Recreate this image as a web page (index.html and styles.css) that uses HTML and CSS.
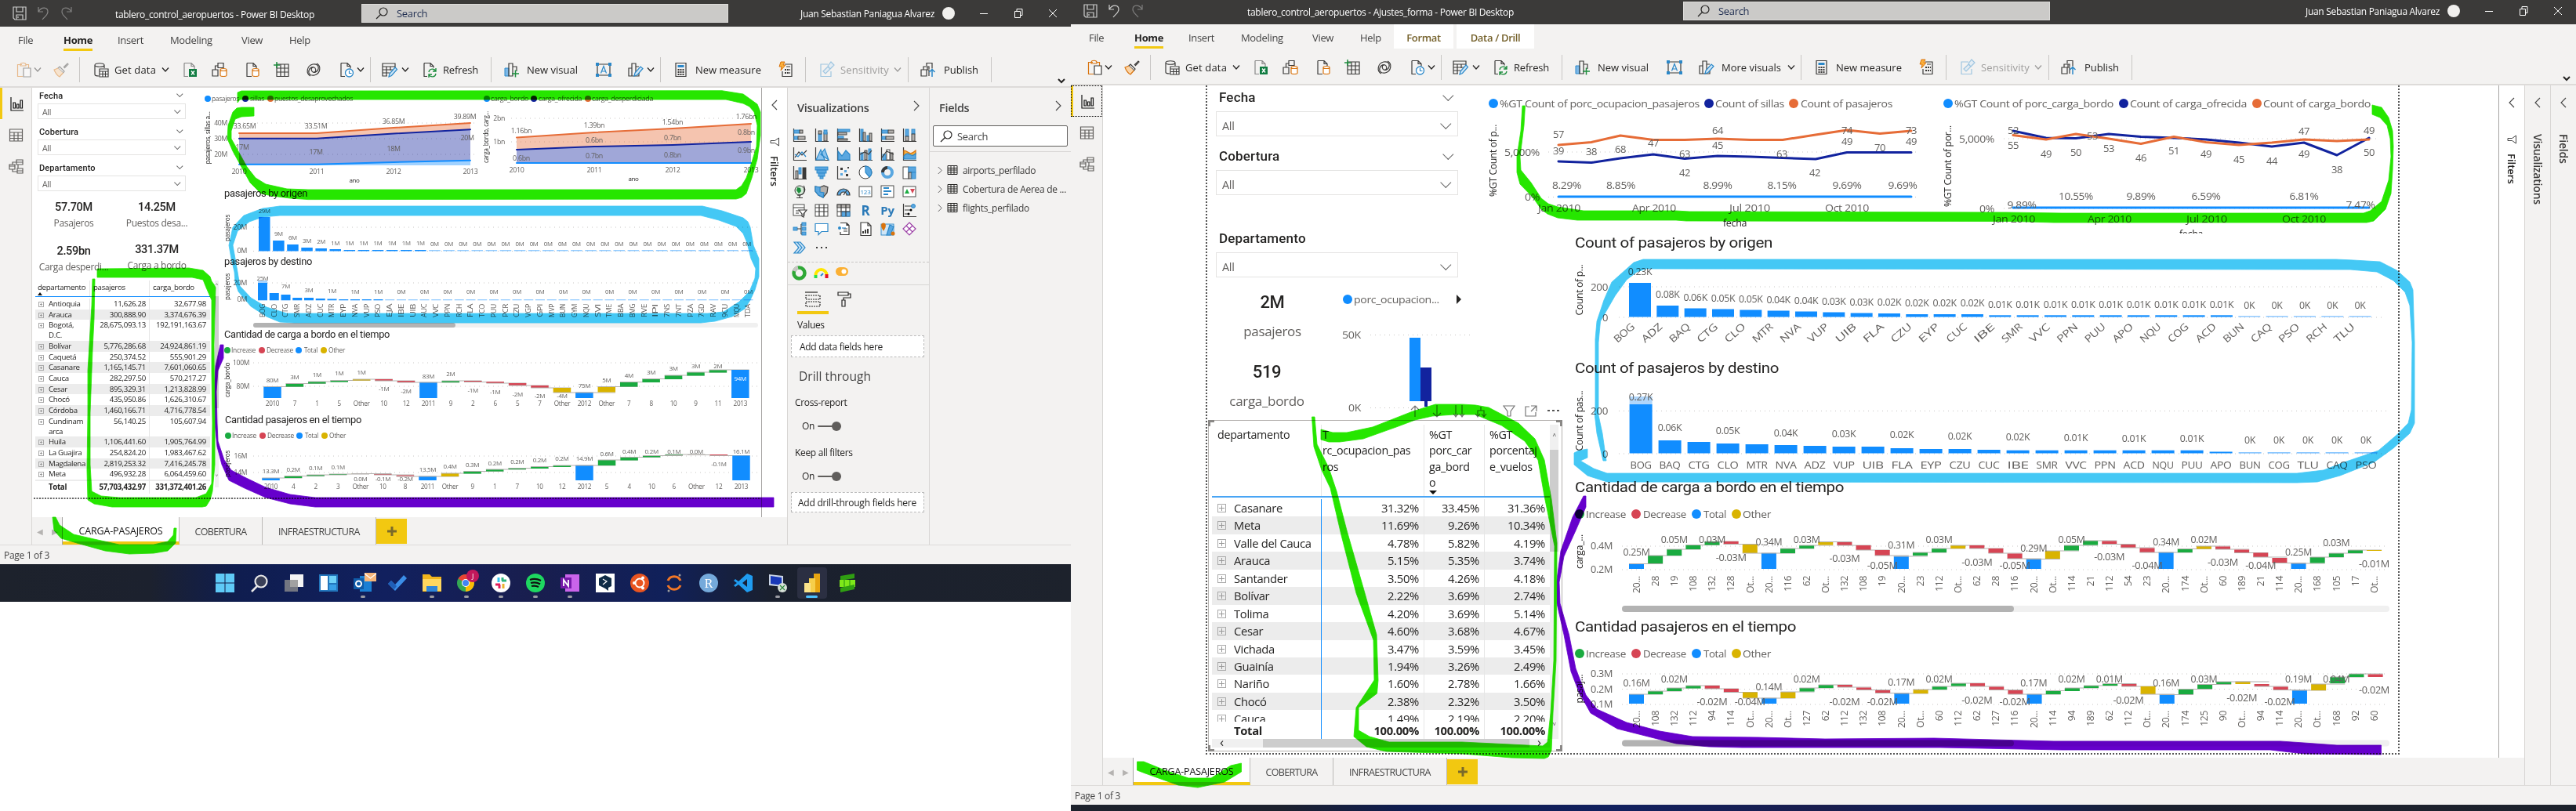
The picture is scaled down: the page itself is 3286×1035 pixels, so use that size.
FILE: index.html
```html
<!DOCTYPE html>
<html lang="en">
<head>
<meta charset="utf-8">
<title>tablero_control_aeropuertos</title>
<link rel="stylesheet" href="styles.css">
</head>
<body>
<main class="desk">
  <section class="win win-a">
    <header class="titlebar" data-title="tablero_control_aeropuertos - Power BI Desktop" data-w="254"></header>
    <nav class="menu"></nav>
    <div class="ribbon"></div>
    <div class="body">
      <aside class="rail"></aside>
      <div class="center">
        <div class="stage">
          <div class="report">
            <div class="col-a">
              <div class="slicers">
                <div class="slicer"><div class="slicer-h">Fecha<i class="cv"></i></div><div class="drop">All<i class="cv"></i></div></div>
                <div class="slicer"><div class="slicer-h">Cobertura<i class="cv"></i></div><div class="drop">All<i class="cv"></i></div></div>
                <div class="slicer"><div class="slicer-h">Departamento<i class="cv"></i></div><div class="drop">All<i class="cv"></i></div></div>
              </div>
              <div class="cards">
                <div class="card"><b>57.70M</b><span>Pasajeros</span></div>
                <div class="card"><b>14.25M</b><span>Puestos desa...</span></div>
                <div class="card low"><b>2.59bn</b><span>Carga desperdi...</span></div>
                <div class="card"><b>331.37M</b><span>Carga a bordo</span></div>
              </div>
              <div class="matrix-wrap">
                <div class="matrix" id="matrixA"></div>
                <div class="vscroll"><em>˄</em><i></i><em>˅</em></div>
              </div>
            </div>
            <div class="col-b">
              <div class="pair"><svg id="a1"></svg><svg id="a2"></svg></div>
              <svg id="a3"></svg><svg id="a4"></svg><svg id="a5"></svg><svg id="a6"></svg>
            </div>
          </div>
          <aside class="filters"></aside>
        </div>
        <footer class="tabs"></footer>
      </div>
      <aside class="viz">
        <h2>Visualizations<svg class="arr" viewBox="0 0 8 14"><path d="M1 1l6 6-6 6"/></svg></h2>
        <div class="viz-grid" id="vizGrid"></div>
        <div class="custom" id="custom"></div>
        <div class="fmt" id="fmt"></div>
        <p class="lbl">Values</p>
        <div class="well"><span data-fit="106">Add data fields here</span></div>
        <h3><span data-fit="92">Drill through</span></h3>
        <p class="sub">Cross-report</p>
        <div class="toggle">On<i></i></div>
        <p class="sub">Keep all filters</p>
        <div class="toggle">On<i></i></div>
        <div class="well w2"><span data-fit="151">Add drill-through fields here</span></div>
      </aside>
      <aside class="fields">
        <h2>Fields<svg class="arr" viewBox="0 0 8 14"><path d="M1 1l6 6-6 6"/></svg></h2>
        <div class="fsearch"><svg class="mag" viewBox="0 0 16 16"><circle cx="10" cy="6" r="5"/><path d="M6.5 9.5L1 15"/></svg>Search</div>
        <ul id="fieldList"></ul>
      </aside>
    </div>
    <div class="status">Page 1 of 3</div>
    <div class="taskbar" id="taskbar"></div>
  </section>

  <section class="win win-b">
    <header class="titlebar" data-title="tablero_control_aeropuertos - Ajustes_forma - Power BI Desktop" data-w="340"></header>
    <nav class="menu"></nav>
    <div class="ribbon"></div>
    <div class="body">
      <aside class="rail"></aside>
      <div class="center">
        <div class="stage">
          <div class="report">
            <div class="col-a">
              <div class="slicers">
                <div class="slicer"><div class="slicer-h">Fecha<i class="cv"></i></div><div class="drop">All<i class="cv"></i></div></div>
                <div class="slicer"><div class="slicer-h">Cobertura<i class="cv"></i></div><div class="drop">All<i class="cv"></i></div></div>
                <div class="slicer far"><div class="slicer-h">Departamento</div><div class="drop">All<i class="cv"></i></div></div>
              </div>
              <div class="mid">
                <div class="cards">
                  <div class="card"><b>2M</b><span>pasajeros</span></div>
                  <div class="card low"><b>519</b><span>carga_bordo</span></div>
                </div>
                <svg id="b0"></svg>
              </div>
              <div class="matrix-frame">
                <div class="matrix" id="matrixB"></div>
                <div class="vscroll"><em>˄</em><i></i><em>˅</em></div>
                <div class="hscroll"><em>‹</em><i></i><em>›</em></div>
                <s class="h tl"></s><s class="h tr"></s><s class="h bl"></s><s class="h br"></s>
              </div>
            </div>
            <div class="col-b">
              <div class="pair"><svg id="b1"></svg><svg id="b2"></svg></div>
              <svg id="b3"></svg><svg id="b4"></svg><svg id="b5"></svg><svg id="b6"></svg>
            </div>
          </div>
          <aside class="filters"></aside>
        </div>
        <footer class="tabs"></footer>
      </div>
      <aside class="slim"><svg class="arr" viewBox="0 0 8 14"><path d="M7 1L1 7l6 6"/></svg><span>Visualizations</span></aside>
      <aside class="slim"><svg class="arr" viewBox="0 0 8 14"><path d="M7 1L1 7l6 6"/></svg><span>Fields</span></aside>
    </div>
    <div class="status">Page 1 of 3</div>
    <div class="taskbar"></div>
  </section>
  <svg class="ink" id="ink" viewBox="0 0 3286 1035"></svg>
</main>
<script src="app.js"></script>
</body>
</html>
```
FILE: styles.css
```css
*{box-sizing:border-box}
body{margin:0;background:#fff;font-family:"Open Sans","Noto Sans",sans-serif;color:#252423;letter-spacing:-.02em}
h2,h3,p,ul{margin:0;padding:0;font-weight:400}
svg{display:block;overflow:visible}
.desk{position:relative;display:flex;align-items:flex-start;width:3286px;height:1035px;overflow:hidden}
.ink{position:absolute;left:0;top:0;width:3286px;height:1035px;mix-blend-mode:multiply;pointer-events:none}
.win{display:flex;flex-direction:column;background:#f3f2f1}
.win-a{width:1366px;height:768px}
.win-b{width:1920px;height:1038px;margin-top:-3px}

.titlebar{display:flex;align-items:center;height:34px;flex:none;background:#3b3a39;color:#fff;font-size:12px}
.titlebar .quick{display:flex;gap:10px;width:147px;padding-left:15px}
.titlebar .quick svg{width:20px;height:20px}
.titlebar .ttl{width:314px;white-space:nowrap;padding-top:3px}
.win-b .titlebar .quick{width:225px}
.win-b .titlebar .ttl{width:556px}
.titlebar .find{display:flex;align-items:center;gap:11px;width:468px;height:24px;padding-left:17px;background:#cbcac8;border:1px solid #dcdbd9;color:#1f2d50;font-size:13px}
.mag{width:16px;height:16px;fill:none;stroke:#252423;stroke-width:1.2}
.titlebar .who{margin-left:auto;display:flex;align-items:center;width:345px;white-space:nowrap}
.titlebar .who .nm{width:181px}
.titlebar .ava{width:16px;height:16px;border-radius:50%;background:#f1f0ee}
.titlebar .ctl{display:flex;gap:32px;margin-left:31px}
.titlebar .ctl svg{width:12px;height:12px;fill:none;stroke:#fff}

.menu{display:flex;height:31px;flex:none;font-size:13px;color:#444;padding-left:23px}
.menu span{height:31px;line-height:34px;white-space:nowrap}
.menu span b{color:#252423;font-weight:700;display:inline-block;height:31px;border-bottom:3px solid #f2c811}
.menu .ctx{background:#fff;color:#74602a;font-weight:600;margin-right:4px;text-align:center}
.ribbon{display:flex;align-items:center;height:47px;flex:none;padding:2px 0 0 21px;border-bottom:2px solid #dddbd9;font-size:13px;position:relative}
.ribbon>*{flex:none;white-space:nowrap}
.ribbon svg.ic{height:20px}
.ribbon .sep{height:32px;border-left:1px solid #c8c6c4}
.ribbon .dim{opacity:.42}
.ribbon .more{position:absolute;right:7px;bottom:3px;width:10px;height:7px;fill:none;stroke:#252423;stroke-width:2}
.lite{opacity:.45}
.win-b .ribbon .lite{opacity:1}

.body{display:flex;flex:1;min-height:0;border-bottom:1px solid #dddbd9}
.rail{width:41px;flex:none;border-right:1px solid #d8d6d4}
.rail div{height:40px;display:flex;align-items:center;justify-content:center}
.rail div:first-child{border-left:3px solid #f2c811}
.win-b .rail div:first-child{outline:1px dotted #000;outline-offset:-1px}
.rail svg{width:19px;height:19px;fill:none;stroke:#605e5c;stroke-width:1.2}
.center{flex:1;min-width:0;display:flex;flex-direction:column}
.stage{flex:1;min-height:0;display:flex;background:#fff}
.report{flex:1;display:flex;min-width:0}
.filters{width:33px;flex:none;border-left:1px solid #a6a4a2;display:flex;flex-direction:column;align-items:center;padding-top:15px}
.arr{width:8px;height:14px;fill:none;stroke:#444;stroke-width:1.1}
.filters .fun{width:12px;height:12px;margin:34px 0 12px;fill:none;stroke:#444}
.filters span{writing-mode:vertical-rl;font-weight:600;font-size:13px;letter-spacing:0}
.slim{width:33px;flex:none;border-left:1px solid #d8d6d4;display:flex;flex-direction:column;align-items:center;padding-top:15px;gap:33px}
.slim span{writing-mode:vertical-rl;font-size:14px;font-weight:600;color:#3b3a39;letter-spacing:-.2px}

.tabs{display:flex;height:35px;flex:none;font-size:12.5px;color:#444;background:#f3f2f1}
.tabs .nav{width:39px;display:flex;align-items:center;justify-content:space-around;font-size:10px;color:#b5b3b1;border-right:1px solid #a6a4a2}
.tabs .tab{display:flex;align-items:center;justify-content:center;border-right:1px solid #bbb9b7;padding-top:1px}
.tabs .on{width:149px;background:#fff;color:#111;border-bottom:4px solid #f2c811;padding-top:4px}
.tabs .t2{width:106px}.tabs .t3{width:145px}
.tabs .plus{width:39px;height:32px;margin-top:2px;background:#f2c811;display:flex;align-items:center;justify-content:center}
.tabs .plus svg{width:12px;height:12px;stroke:#7a6a2a;stroke-width:3}
.status{height:24px;flex:none;font-size:12px;line-height:26px;padding-left:5px;color:#444}
.taskbar{height:48px;flex:none;background:linear-gradient(90deg,#1d222c 0,#1c212e 14%,#0f1d4f 22%,#11205e 36%,#191e4e 50%,#10205a 62%,#1a202e 72%,#1d222c 100%);display:flex;padding-left:265px}
.taskbar div{width:44.05px;flex:none;display:flex;flex-direction:column;align-items:center;padding-top:12px;gap:4px}
.taskbar svg{width:24px;height:24px}
.taskbar u{display:block;width:6px;height:3px;border-radius:2px;background:#9b9ca3}
.taskbar .act{background:#2b2f42;border-radius:4px;height:40px;margin:4px 3px 0;width:38px;padding-top:8px}
.taskbar .act u{width:15px;background:#4cc2ff}
.win-b .taskbar{height:8px}

.cv{display:inline-block;width:6px;height:6px;border:solid #666;border-width:0 1px 1px 0;transform:rotate(45deg) translate(-2px,-1px)}
.slicer-h{display:flex;justify-content:space-between;align-items:center;font-family:Roboto,sans-serif;font-weight:500;letter-spacing:.01em}
.drop{display:flex;justify-content:space-between;align-items:center;border:1px solid #e4e3e2;color:#605e5c}

/* first report */
.win-a .col-a{width:238px;flex:none;display:flex;flex-direction:column}
.win-a .slicers{height:135px;padding-left:7px;width:196px}
.win-a .slicer{height:46px;font-size:10.5px}
.win-a .slicer-h{height:20px;padding:0 4px 0 2px;font-size:11px}
.win-a .drop{height:20px;padding:2px 6px 0 5px}
.win-a .cards{display:grid;grid-template-columns:106px 106px;grid-template-rows:54px 54px;height:111px;font-size:12px;color:#605e5c}
.card{display:flex;flex-direction:column;align-items:center;white-space:nowrap}
.card b{font-family:Roboto,sans-serif;font-weight:500;color:#252423}
.win-a .card b{font-size:14.5px;line-height:20px;margin-top:8px}
.win-a .card span{line-height:20px}
.win-a .card.low b{margin-top:10px}
.matrix-wrap{display:flex;padding-left:4px;height:280px}
.tri{display:block;width:0;height:0;border:solid transparent;border-width:0 3px 4px;border-bottom-color:#111}
.tri.dn{border-width:5px 5px 0;border-top-color:#111}
#matrixA{width:223px;height:272px;display:flex;flex-direction:column;font-size:9.7px}
#matrixA .r{display:grid;grid-template-columns:69px 76px 77px;line-height:13px;flex:none;height:13.7px}
#matrixA .r.two{height:26.6px}
#matrixA .r>*{padding-right:4px;text-align:right;border-left:1px solid #e6e6e6}
#matrixA .r>:first-child{text-align:left;display:flex;gap:6px;padding-left:4px;border-left:0;padding-right:0}
#matrixA .hd{height:21px;border-bottom:1px solid #118dff;line-height:17px}
#matrixA .hd>*{text-align:left;padding-left:4px}
#matrixA .hd>:first-child{display:block;padding-left:3px}
#matrixA .hd .tri{margin-top:-2px}
#matrixA .rows{flex:1;overflow:hidden;padding-top:2px}
#matrixA .alt{background:#ececec}
#matrixA .tot{font-weight:700;height:16px;line-height:16px}
#matrixA .tot>:first-child{padding-left:17px}
.ex{width:7px;height:7px;flex:none;margin-top:4px;border:1px solid #aaa;background:linear-gradient(#999,#999) center/3px 1px no-repeat,linear-gradient(#999,#999) center/1px 3px no-repeat}
.vscroll{display:flex;flex-direction:column;width:11px;background:#f0f0f0;font-size:11px;color:#444}
.vscroll em{font-style:normal;height:20px;text-align:center}
.vscroll i{background:#cdcdcd}
.matrix-wrap .vscroll{width:5px;margin-left:6px;height:264px}
.matrix-wrap .vscroll i{height:143px}
.matrix-wrap .vscroll em:last-child{margin-top:auto}
.win-a .col-b{flex:1}
.pair{display:flex}

/* second report */
.win-b .report{position:relative;padding-left:131px}
.win-b .report::after{content:"";position:absolute;left:131px;top:0;width:1519px;height:852px;border:solid #555;border-width:0 2px 2px;border-style:dotted;pointer-events:none}
.win-b .col-a{width:457px;flex:none;padding-left:2px}
.win-b .slicers{width:320px;padding-left:11px}
.win-b .slicer{height:75px;font-size:14.5px}
.win-b .slicer-h{height:33px;padding:0 7px 3px 4px;font-size:17px}
.win-b .slicer.far{height:104px;padding-top:30px}
.win-b .drop{height:32px;padding:4px 9px 0 7px}
.win-b .cv{width:10px;height:10px}
.win-b .mid{display:flex;height:173px}
.win-b .mid .cards{width:168px;padding-right:2px;font-size:17px;color:#605e5c}
.win-b .mid .card{height:92px}
.win-b .card b{font-size:22px;line-height:26px;margin-top:10px}
.win-b .card span{line-height:26px;margin-top:11px}
.win-b .card.low{padding-right:14px}
.win-b .card.low b{margin-top:7px}
.matrix-frame{position:relative;width:452px;height:423px;margin-left:1px;padding:5px 4px 0;border:1px solid #b3b0ad;display:grid;grid-template-columns:431px 11px;grid-template-rows:401px 11px}
#matrixB{font-size:14.8px;display:flex;flex-direction:column}
#matrixB .r{display:grid;grid-template-columns:140px 131px 77px 83px;height:22.45px;line-height:22px;flex:none}
#matrixB .r>*{text-align:right;padding-right:6px;border-right:1px solid #e6e6e6;overflow:hidden}
#matrixB .r>:first-child{text-align:left;display:flex;gap:10px;padding-left:7px;border-right:1px solid #118dff}
#matrixB .r>:last-child{border-right:0}
#matrixB .hd{height:93px;line-height:20.3px;border-bottom:2px solid #49a5f5;white-space:pre;font-size:14.3px}
#matrixB .hd>*{text-align:left;padding:3px 0 0 6px}
#matrixB .hd>:nth-child(2){padding-left:1px}
#matrixB .hd>:first-child{border-right-color:#e6e6e6}
#matrixB .rows{flex:1;overflow:hidden;padding-top:2px}
#matrixB .alt{background:#ececec}
#matrixB .tot{font-weight:700}
#matrixB .tot>:first-child{padding-left:28px}
#matrixB .ex{width:11px;height:11px;margin-top:6px;background-size:7px 1px,1px 7px}
.matrix-frame .vscroll em{height:32px;line-height:36px;font-size:16px}
.matrix-frame .vscroll i{height:130px}
.matrix-frame .vscroll em:last-child{margin-top:auto}
.hscroll{display:flex;width:431px;background:#f0f0f0;font-size:17px;line-height:8px}
.hscroll em{font-style:normal;width:65px;padding-left:10px}
.hscroll em:last-child{width:26px}
.hscroll i{flex:1;background:#cdcdcd}
.h{position:absolute;width:8px;height:8px;border:0 solid #8a8886}
.tl{left:-1px;top:-1px;border-width:3px 0 0 3px}.tr{right:-1px;top:-1px;border-width:3px 3px 0 0}
.bl{left:-1px;bottom:-1px;border-width:0 0 3px 3px}.br{right:-1px;bottom:-1px;border-width:0 3px 3px 0}
.win-b .col-b{width:1062px;flex:none}
.win-b .pair{margin-left:-100px}

/* visualization + fields panes */
.viz{width:181px;flex:none;border-left:1px solid #d8d6d4}
.viz h2,.fields h2{display:flex;justify-content:space-between;align-items:center;font-size:14.5px;font-weight:600;color:#444;height:48px;padding:2px 12px 0 12px}
.viz h2 svg,.fields h2 svg{margin-bottom:5px}
.viz-grid{display:grid;grid-template-columns:repeat(6,28px);grid-auto-rows:24px;padding-left:6px;height:175px;border-bottom:1px dashed #c8c6c4}
.viz-grid svg{width:18px;height:18px;margin:3px 0 0}
.custom{display:flex;gap:9px;height:29px;padding:4px 0 0 5px;border-bottom:1px solid #d8d6d4}
.custom svg{width:19px;height:19px}
.fmt{display:flex;height:37px;padding-left:12px}
.fmt div{width:40px;display:flex;justify-content:center;padding-top:8px}
.fmt div:first-child{border-bottom:4px solid #f2c811}
.fmt svg{width:20px;height:20px;fill:none;stroke:#252423;stroke-width:1.2}
.lbl{font-size:12px;padding-left:12px;height:27px;line-height:28px}
.well{margin:0 6px 0 4px;height:28px;border:1px dashed #bbb;background:#fff;font-size:12px;line-height:27px;padding-left:10px;white-space:nowrap}
.well.w2{padding-left:8px;height:26px;line-height:25px;margin-top:3px}
.viz h3{font-size:15.5px;color:#444;font-weight:500;padding-left:14px;height:41px;line-height:48px}
.sub{font-size:12px;padding-left:9px;height:32px;line-height:33px}
.toggle{font-size:12px;padding-left:18px;display:flex;align-items:center;height:32px;gap:4px;line-height:26px;padding-bottom:3px}
.toggle i{width:30px;height:2px;background:#605e5c;border-radius:1px;display:flex;justify-content:flex-end;align-items:center}
.toggle i::after{content:"";width:12px;height:12px;border-radius:50%;background:#605e5c}
.fields{width:181px;flex:none;border-left:1px solid #d8d6d4}
.fsearch{display:flex;align-items:center;gap:6px;margin:0 4px;height:27px;border:1px solid #605e5c;border-radius:2px;background:#fff;font-size:13px;padding-left:8px;color:#444}
.fields ul{margin-top:6px;border-top:1px solid #d8d6d4;padding-top:11px;list-style:none;font-size:12px}
.fields li{display:flex;align-items:center;height:24px;padding-left:10px;white-space:nowrap;color:#3b3a39}
.fields li .arr{width:6px;height:11px;margin-right:6px}
.fields li .tb{width:14px;height:14px;margin-right:6px;fill:none;stroke:#252423}
```
FILE: app.js
```js
const $ = (s, r = document) => r.querySelector(s);
const $$ = (s, r = document) => [...r.querySelectorAll(s)];
const BLUE = '#118dff', NAVY = '#12239e', ORANGE = '#e66c37', GREEN = '#1aab40', RED = '#d64554', GOLD = '#d9b300';

/* ---------- window chrome ---------- */
const S = (d, s = '#3b3a39', f = 'none', w = 1.2) => `<path d="${d}" stroke="${s}" fill="${f}" stroke-width="${w}"/>`;
const CYL = (x, y, s, h = 7) => S(`M${x} ${y}v${h}c0 2 8 2 8 0v-${h}M${x} ${y}c0 2 8 2 8 0c0-2-8-2-8 0`, s, '#fff');
const ICON = {
  paste: S('M7 3.5H1.5v15H8M12 3.5h3.5V8M5 3.5c0-3 7-3 7 0v1.5H5z', '#d9730d') + S('M9 8h9v11H9z', '#3b3a39', '#fff'),
  brush: S('M13 7l5-5 1 1-5 5M8 6l6 6-1.5 2L6 8z') + S('M6 8l-5 2c2 5 5 8 7 9l4.5-5', '#d9730d', '#fbd3a4'),
  db: S('M2 4v12c0 1 2 2 5 2M2 4c0 3 12 3 12 0s-12-3-12 0M14 4v4') + S('M8 9h11v10H8zM8 12h11M8 15.5h11M12 12v7M15.5 12v7', '#3b3a39', '#fff'),
  excel: S('M3 1.5h9l4 4V9M3 1.5v17h5M12 1.5v4h4', '#888') + '<path fill="#107c41" d="M9 9h10v10H9z"/>' + S('M12 11.5l4 5M16 11.5l-4 5', '#fff', 'none', 1.4),
  model: S('M8 1.5h7v6H8zM1 10h7v8H1zM4.5 10V5H8') + CYL(11, 10, '#d9730d'),
  sql: S('M3 1.5h8l4 4v3M3 1.5v17h6M11 1.5v4h4') + CYL(10, 10, '#d9730d'),
  enter: S('M4 3h15v15.5H4zM4 8h15M4 13h15M9 3v15M14 3v15') + S('M0 4h8M4 0v8', '#1e8e3e', 'none', 1.5),
  verse: S('M14 2c6 3 5 13-3 15-5 1-8-2-7-6s6-6 8-3 0 6-3 5M6 18c-6-3-5-13 3-15 5-1 8 2 7 6s-6 6-8 3 0-6 3-5'),
  recent: S('M3 1.5h8l4 4v3M3 1.5v17h5M11 1.5v4h4') + `<circle cx="13.5" cy="14" r="5" fill="#fff" stroke="#2b88c9" stroke-width="1.3"/>` + S('M13.5 11v3.5h3', '#2b88c9'),
  trans: S('M1 2h16v4H1zM1 10h13M1 14h9M1 2v16h6M6 6v12M11 6v5M17 6v2') + S('M9 19l1-4 7-8 2.5 2.5-7 8z', '#2b88c9', '#cfe6f7'),
  refresh: S('M3 1.5h8l4 4v2M3 1.5v17h4M11 1.5v4h4') + S('M9 13c1-5 7-5 9-1M18 8v4h-4M18 15c-1 5-7 5-9 1M9 20v-4h4', '#1e8e3e', 'none', 1.4),
  newvis: '<path d="M1 8h5v10H1z" fill="#7cb8e8" stroke="#2b88c9"/>' + S('M6 2h5v16H6zM11 6h5v6') + S('M10 15h9M14.5 10.5v9', '#1e8e3e', 'none', 1.5),
  text: S('M2 3h16v14H2z') + '<path d="M0 1h4v4H0zM16 1h4v4h-4zM0 15h4v4H0zM16 15h4v4h-4z" fill="#2b88c9"/>' + S('M6.5 14.5L10 5.5l3.5 9M7.5 12h5', '#2b88c9'),
  more: S('M1 8h4v10H1zM5 2h5v16H5zM10 6h4M14 12v6h-4') + S('M8 18l1-4 7-8 3 2.5-7 8z', '#2b88c9', '#cfe6f7'),
  calc: S('M2 1.5h13v17H2z') + '<path d="M4.5 4h8v3h-8z" fill="#2b88c9"/><path d="M4.5 9h2v2h-2zm3 0h2v2h-2zm3 0h2v2h-2zm-6 3h2v2h-2zm3 0h2v2h-2zm3 0h2v2h-2zm-6 3h2v2h-2zm3 0h2v2h-2zm3 0h2v2h-2z" fill="#3b3a39"/>',
  quick: S('M8 3h9v15.5H5V12M10 6h5') + '<path d="M8 9h2v2H8zm3 0h2v2h-2zm3 0h1v2h-1zm-6 4h2v2H8zm3 0h2v2h-2zm3 0h1v2h-1z" fill="#3b3a39"/>' + S('M3 0h5L6 4h3l-6 7 1-5H1z', '#d9730d', '#fbb03b', 1),
  sens: S('M11 3H2v15.5h13V12', '#2b88c9') + S('M5 12l6-6 3 3-6 6zM11 5l4-5 4 4-5 5z', '#2b88c9', '#cfe6f7'),
  pub: S('M6 6h5v3M1 10h7v8H1zM8 5V1.5h7v7M4 10V6h5v4M8 10h3v8') + S('M15 19v-9M11.5 13l3.5-3.5 3.5 3.5', '#2b88c9', 'none', 1.5)
};
const ribbon = wide => [
  ['paste', 22, 'lite'], ['v', 25, 'lite'], ['brush', 33, 'lite'], ['|', 18], ['db', 27], ['t', 60, 'Get data', 53], ['v', 26],
  ['excel', 38], ['model', 42], ['sql', 37], ['enter', 41], ['verse', 42], ['recent', 23], ['v', 17], ['|', 15],
  ['trans', 25], ['v', 26], ['refresh', 27], ['t', 61, 'Refresh', 45], ['|', 17], ['newvis', 29], ['t', 88, 'New visual', 65],
  ['text', 41], ...(wide ? [['more', 29], ['t', 84, 'More visuals', 76]] : [['more', 24]]), ['v', 17], ['|', 18],
  ['calc', 27], ['t', 106, 'New measure', 84], ['quick', 34], ['|', 18], ['sens', 27, 'dim'], ['t', 68, 'Sensitivity', 62, 'dim'],
  ['v', 18, 'dim'], ['|', 16], ['pub', 30], ['t', 60, 'Publish', 44], ['|', 4]];
const LEFT = '<svg class="arr" viewBox="0 0 8 14"><path d="M7 1L1 7l6 6"/></svg>';

$$('.win').forEach((win, n) => {
  const tb = $('.titlebar', win), st = (d, o) => `<svg viewBox="0 0 20 20"><g opacity="${o}">${S(d, '#fff')}</g></svg>`;
  tb.innerHTML = `<div class="quick">${st('M2 2h16v16H4l-2-2zM6 2v6h8V2M6 18v-6h8v6M8 14v2', .75)}${st('M4 2v6h6M4 8c4-7 12-6 12 0 0 4-3 5-7 10', n ? .75 : .4)}${st('M16 2v6h-6M16 8C12 1 4 2 4 8c0 4 3 5 7 10', .35)}</div>
    <div class="ttl"><span data-fit="${tb.dataset.w}">${tb.dataset.title}</span></div>
    <div class="find"><svg class="mag" viewBox="0 0 16 16"><circle cx="10" cy="6" r="5"/><path d="M6.5 9.5L1 15"/></svg>Search</div>
    <div class="who"><div class="nm"><span data-fit="171">Juan Sebastian Paniagua Alvarez</span></div><div class="ava"></div>
    <div class="ctl"><svg viewBox="0 0 12 12"><path d="M1 6.5h10"/></svg><svg viewBox="0 0 12 12"><path d="M1.5 3.5h7v8h-7zM4 3V.5h7v8H9"/></svg><svg viewBox="0 0 12 12"><path d="M1 1l10 10M11 1L1 11"/></svg></div></div>`;
  $('.menu', win).innerHTML = [['File', 58], ['<b>Home</b>', 69], ['Insert', 67], ['Modeling', 91], ['View', 61], ['Help', 43]]
    .map(([t, w]) => `<span style="width:${w}px">${t}</span>`).join('') + (n ? '<span class="ctx" style="width:76px">Format</span><span class="ctx" style="width:99px">Data / Drill</span>' : '');
  $('.ribbon', win).innerHTML = ribbon(n).map(([k, w, a, b, c]) =>
    k === '|' ? `<div class="sep" style="width:${w}px"></div>` :
    k === 't' ? `<div class="${c || ''}" style="width:${w}px"><span data-fit="${b}">${a}</span></div>` :
    k === 'v' ? `<div class="${a || ''}" style="width:${w}px"><svg width="10" height="8" viewBox="0 0 10 8" fill="none" stroke="#252423" stroke-width="1.3"><path d="M1 1.5l4 4.5 4-4.5"/></svg></div>` :
    `<div class="${a || ''}" style="width:${w}px"><svg class="ic" width="20" viewBox="0 0 20 20">${ICON[k]}</svg></div>`).join('') +
    '<svg class="more" viewBox="0 0 10 7"><path d="M1 1l4 4 4-4"/></svg>';
  $('.rail', win).innerHTML = ['<path stroke="#111" d="M2 1v17h16M5 8h2.5v7H5zM9.5 10H12v5H9.5zM14 5h2.5v10H14z"/>', '<path d="M1.5 2h16v15h-16zM1.5 6h16M1.5 10h16M1.5 13.5h16M7 6v11M12 6v11"/>', '<path d="M10 1h8v6h-8zM1 7h7v6H1zM11 12h7v6h-7zM12 7v5M5 7V4h5M5 13v3h6M10 4h8M1 9h7M11 15h7"/>']
    .map(p => `<div><svg viewBox="0 0 19 19">${p}</svg></div>`).join('');
  $('.filters', win).innerHTML = LEFT + '<svg class="fun" viewBox="0 0 12 12"><path d="M11.5 1v10L6.5 7.5H1v-3h5.5z"/></svg><span>Filters</span>';
  $('.tabs', win).innerHTML = '<div class="nav"><span>◀</span><span>▶</span></div><div class="tab on"><span data-fit="107">CARGA-PASAJEROS</span></div><div class="tab t2"><span data-fit="66">COBERTURA</span></div><div class="tab t3"><span data-fit="104">INFRAESTRUCTURA</span></div><div class="plus"><svg viewBox="0 0 12 12"><path d="M6 0v12M0 6h12"/></svg></div>';
});

/* ---------- panes ---------- */
const D = '#3b3a39', B = '#5aa7e0', L = '#2b88c9', G = '#b3b0ad';
const ax = S('M1.5 1v16.5H18', D);
const R = (x, y, w, h, f = B, s = L) => `<rect x="${x}" y="${y}" width="${w}" height="${h}" fill="${f}" stroke="${s}" stroke-width=".9"/>`;
const viz = [
  ax + R(2, 3, 7, 4) + R(9, 3, 4, 4, G, D) + R(2, 11, 5, 4) + R(7, 11, 9, 4, G, D),
  ax + R(5, 8, 4, 9) + R(5, 4, 4, 4, G, D) + R(12, 6, 4, 11, G, D) + R(12, 3, 4, 5),
  ax + R(2, 2, 15, 3) + R(2, 6, 11, 3, G, D) + R(2, 11, 7, 3) + R(2, 14, 12, 2, G, D),
  ax + R(3, 2, 3, 15) + R(6, 6, 3, 11, G, D) + R(11, 10, 3, 7) + R(14, 7, 3, 10, G, D),
  ax + R(2, 3, 8, 4) + R(10, 3, 7, 4, G, D) + R(2, 11, 5, 4) + R(7, 11, 10, 4, G, D),
  ax + R(4, 2, 4, 9) + R(4, 11, 4, 6, G, D) + R(12, 2, 4, 6) + R(12, 8, 4, 9, G, D),
  ax + S('M3 14l5-7 4 4 6-6', D) + S('M3 10l4 3 5-6 5 6', L),
  ax + S('M2 17L8 4l5 13zM8 10l5-7 5 14z', L, '#8cc4ee'),
  ax + S('M2 6l5 6 5-7 5 5v7H2z', L, B),
  ax + R(3, 8, 3, 9) + R(8, 5, 3, 12, G, D) + R(13, 3, 3, 14) + S('M2 10l6-3 5 3 4-5', D),
  ax + R(3, 10, 4, 7) + R(8, 4, 4, 13, '#fff', D) + R(13, 8, 3, 9, G, D) + S('M2 14l6-8 9 4', D),
  ax + S('M2 5c6 0 6 8 15 0v5c-6 4-9 0-15 2z', '#d9730d', '#fbb03b') + S('M2 12c6-8 9 4 15-3v7H2z', L, B),
  ax + R(4, 7, 3, 10, G, D) + R(8, 3, 3, 8) + R(13, 3, 4, 14, D, D),
  R(1, 2, 16, 4) + R(3, 6, 12, 4) + R(5, 10, 8, 4) + R(7, 14, 4, 3),
  ax + '<path fill="#3b3a39" d="M5 3h3v3H5zM12 11h3v3h-3zM14 2h2v2h-2z"/><path fill="#5aa7e0" d="M5 10h3v3H5zM10 6h3v3h-3z"/>',
  '<circle cx="9" cy="9" r="8" fill="#fff" stroke="#3b3a39"/>' + S('M9 1a8 8 0 0 1 5 14L9 9z', L, B),
  '<circle cx="9" cy="9" r="6" fill="none" stroke="#5aa7e0" stroke-width="4"/><path d="M9 3a6 6 0 0 0-6 6" fill="none" stroke="#3b3a39" stroke-width="4"/>',
  R(1, 2, 7, 15, '#fff', D) + R(8, 2, 9, 7) + R(8, 9, 4, 8, G, D) + R(12, 9, 5, 8),
  '<circle cx="9" cy="8" r="6" fill="#d7ead9" stroke="#3b3a39"/><path d="M6 4l4 1 1 4-3 3-3-4z" fill="#1e8e3e"/>' + S('M14 2c4 6 0 13-8 12M9 14v3M5 17.5h8', D),
  S('M1 3l6 1 5-2 5 2-1 7-5 6-6-3-4-5z', D, G) + S('M1 3l6 1v6l5 1-1 6-6-3-4-5z', L, B),
  S('M1 14a8 8 0 0 1 16 0h-4a4 4 0 0 0-8 0z', D, B) + S('M9 14l4-6', D),
  R(1, 3, 16, 13, '#fff', D) + '<text x="9" y="13" font-size="8" text-anchor="middle" fill="#2b88c9" textLength="13">123</text>',
  R(1, 2, 16, 15, '#fff', D) + S('M4 5h7M4 9h10M4 13h6', L, 'none', 2),
  R(1, 3, 16, 13, '#fff', D) + '<path d="M3 12l3-6 3 6z" fill="#1aab40"/><path d="M10 6h6l-3 6z" fill="#d64554"/>',
  R(1, 2, 14, 14, '#fff', D) + S('M1 6h14M4 10h4M4 13h4', D) + S('M8 9h10l-4 5v4l-2-1v-3z', D, '#fff'),
  R(1, 2, 16, 15, '#fff', D) + S('M1 6h16M1 11h16M6 2v15M12 2v15', D),
  R(1, 2, 16, 15, '#fff', D) + R(1, 2, 16, 4, G, D) + R(7, 11, 10, 6) + S('M1 11h16M6 2v15M12 2v15', D),
  '<text x="9" y="16" font-size="17" font-weight="700" text-anchor="middle" fill="#2b7ab8">R</text>',
  '<text x="9" y="15" font-size="15" font-weight="700" text-anchor="middle" fill="#2b7ab8">Py</text>',
  ax + S('M3 4h10M3 9h7M3 14h4', D) + '<circle cx="14" cy="4" r="2.5" fill="#5aa7e0" stroke="#2b88c9"/><circle cx="11" cy="9" r="1.5"/><circle cx="8" cy="14" r="1.5"/>',
  R(1, 7, 5, 4) + S('M6 9h5M11 3v13M11 3h2M11 16h2', D) + R(12, 1, 5, 4) + R(12, 7, 5, 4) + R(12, 13, 5, 4),
  S('M1 2.5h16v10H9l-4 4v-4H1z', L, '#fff'),
  S('M5 1.5h8l3 3v12H5V13M13 1.5v3h3M9 9h5M9 12h5', D, '#fff') + '<circle cx="4" cy="8" r="2" fill="#2b88c9"/>' + S('M7 8h5', L),
  S('M3 1h9l4 4v12.5H3zM12 1v4h4', D, '#fff') + S('M6 15v-3M9 15v-5M12 15V9', D, 'none', 2),
  R(1, 3, 16, 14, '#cfe6f7') + S('M8 17l4-13 5 2-4 11z', L, B) + '<path d="M4 9C-1 1 9 1 4 9z" fill="#d9730d" stroke="#d9730d" stroke-width="3"/><circle cx="16" cy="15" r="2.5" fill="#d9730d"/>',
  S('M9 1l8 8-8 8-8-8zM5 5l8 8M13 5l-8 8', '#9b3fa5', '#fff'),
  S('M2 2h8l6 7-6 7H2l6-7zM6 2l6 7-6 7', L, '#cfe6f7'),
  '<path fill="#3b3a39" d="M2 8h2v2H2zm6 0h2v2H8zm6 0h2v2h-2z"/>'
];
$('#vizGrid').innerHTML = viz.map(v => `<svg viewBox="0 0 18 18">${v}</svg>`).join('');
$('#custom').innerHTML = '<svg viewBox="0 0 19 19"><circle cx="9.5" cy="9.5" r="7" fill="none" stroke="#2fa836" stroke-width="4.5"/><path d="M3 7a7 7 0 0 1 5-4.5" fill="none" stroke="#c8c6c4" stroke-width="4.5"/></svg><svg viewBox="0 0 19 19"><path d="M2.5 16v-4" stroke="#2be04a" stroke-width="4"/><path d="M2.5 12a7 7 0 0 1 14 0" fill="none" stroke="#ffe600" stroke-width="4"/><path d="M16.5 11v5" stroke="#e81123" stroke-width="4"/><path d="M9 13l3-3" stroke="#2b88c9" stroke-width="2"/></svg><svg viewBox="0 0 19 19"><rect y="2" width="16" height="11" rx="5.5" fill="#fbb034"/><circle cx="10.5" cy="7.5" r="3" fill="#fff"/></svg>';
$('#fmt').innerHTML = '<div><svg viewBox="0 0 20 20"><path d="M0 1h16"/><path stroke-dasharray="2 1" d="M1 5h18v5H1zM1 13h18v6H1z"/></svg></div><div><svg viewBox="0 0 20 20"><path d="M2 1h13v4H2zM15 3h3v5H9v3M7 11h4v8H7z"/></svg></div>';
$('#fieldList').innerHTML = [['airports_perfilado', 93], ['Cobertura de Aerea de ...', 132], ['flights_perfilado', 85]].map(([t, w]) => `<li><svg class="arr" viewBox="0 0 8 14"><path d="M1 1l6 6-6 6"/></svg><svg class="tb" viewBox="0 0 14 14"><path d="M1 1.5h12v11H1zM1 4.5h12M1 7h12M1 10h12M5 1v11M9 1v11"/></svg><span data-fit="${w}">${t}</span></li>`).join('');

/* ---------- task bar ---------- */
const P = (d, f) => `<path d="${d}" fill="${f}"/>`, C = (x, y, r, f) => `<circle cx="${x}" cy="${y}" r="${r}" fill="${f}"/>`;
const apps = [
  [P('M0 0h11.5v11.5H0zM12.5 0H24v11.5H12.5zM0 12.5h11.5V24H0zM12.5 12.5H24V24H12.5z', '#5fcaf7')],
  ['<circle cx="14" cy="10" r="7.5" fill="#3a4058" stroke="#e8e8e8" stroke-width="2.2"/>' + S('M9 16l-7 7', '#e8e8e8', 'none', 2.5)],
  [P('M7 1h17v16H7z', '#f4f4f4') + P('M0 8h17v15H0z', '#8c8c8ccc')],
  [P('M0 1h24v22H0z', '#2376bc') + P('M2 3h9v18H2z', '#fff') + P('M13 3h9v9h-9z', '#6fd2f8') + P('M13 14h9v7h-9z', '#38a0e8')],
  [P('M8 3h15v20H8z', '#1a7fd4') + P('M0 6h13v14H0z', '#0f5ba8') + '<circle cx="6.5" cy="13" r="3.5" fill="none" stroke="#fff" stroke-width="2"/>' + P('M14 -1h15v11H14z', '#f5b57a') + S('M14 0l7.5 6L29 0', '#fff'), 1],
  [P('M0 13l4-4 5 5L20 2l4 4L9 22z', '#3b8ee8') + P('M0 13l4-4 7 7-3 4z', '#1f5fb8')],
  [P('M0 1h9l3 3h12v19H0z', '#f2b51d') + P('M0 7h24v15H0z', '#ffd75e') + P('M5 16h14v7H5z', '#2f86d8'), 1],
  [C(11, 12, 11, '#34a853') + P('M11 12L1.5 6.5A11 11 0 0 1 20.5 6.5z', '#ea4335') + P('M11 12l9.5-5.5A11 11 0 0 1 11 23z', '#fbbc05') + C(11, 12, 5, '#fff') + C(11, 12, 4, '#4285f4') + C(20, 3, 8, '#c2185b') + '<text x="20" y="6.5" font-size="9" fill="#fff" text-anchor="middle">J</text>', 1],
  [C(12, 12, 12, '#fff') + S('M9 5v6', '#36c5f0', 'none', 3) + S('M13 9h6M14 5v4', '#2eb67d', 'none', 3) + S('M15 13v6', '#ecb22e', 'none', 3) + S('M5 14h6M10 14v5', '#e01e5a', 'none', 3), 1],
  [C(12, 12, 12, '#1ed760') + S('M5 8c5-2 10-1 14 1M6 12c4-1 8-1 12 1.5M7 16c4-1 7 0 9 1', '#111', 'none', 2.3), 1],
  [P('M6 1h18v22H6z', '#ca64ea') + P('M0 5h14v14H0z', '#7719aa') + S('M4 16V8l6 8V8', '#fff', 'none', 1.8), 1],
  [P('M0 0h24v24H0z', '#fff') + P('M12 2l8 4v10l-4 2v4l-4-3-8-4V6z', '#0f2b46') + S('M9 7l5 3-5 4', '#fff')],
  [C(12, 12, 12, '#e95420') + '<circle cx="12" cy="12" r="5.5" fill="none" stroke="#fff" stroke-width="2"/>' + C(5, 12, 2, '#fff') + C(16, 5.5, 2, '#fff') + C(16, 18.5, 2, '#fff')],
  [S('M4 9c3-7 13-7 16 0', '#f37726', 'none', 3) + S('M4 15c3 7 13 7 16 0', '#f37726', 'none', 3) + C(19, 2, 1.5, '#9e9e9e') + C(5, 22, 1.5, '#9e9e9e')],
  [C(12, 12, 12, '#75aadb') + '<text x="12" y="18" font-size="16" font-family="Liberation Serif" fill="#fff" text-anchor="middle">R</text>'],
  [P('M17 0l7 3v18l-7 3L6 14l-4 3-2-2 4-3-4-3 2-2 4 3zM17 7l-6 5 6 5z', '#1f9cf0')],
  [P('M1 1l18 2v14L1 15z', '#c9d4e6') + P('M3 3l14 2v10L3 13z', '#1838b8') + C(18, 18, 6, '#d8e0d8') + S('M15 15l3 3-3 3M21 15l-3 3 3 3', '#2e8b3d'), 1],
  [P('M14 0h8v24h-8z', '#e8a511') + P('M8 6h8v18H8z', '#f6cf4a') + P('M2 12h8v12H2z', '#fbe38a'), 1, 'act'],
  [P('M4 3l18-3v6L4 9z', '#2f9e12') + P('M3 8h20v9H3z', '#7ee81a') + P('M4 18l18-4v6L4 24z', '#2f9e12') + S('M9 8v9M16 8v9', '#2f9e12')]
];
$('#taskbar').innerHTML = apps.map(([g, u, c]) => `<div class="${c || ''}"><svg viewBox="0 0 24 24">${g}</svg>${u ? '<u></u>' : ''}</div>`).join('');

/* ---------- matrices ---------- */
const rowsA = [['Antioquia', '11,626.28', '32,677.98'], ['Arauca', '300,888.90', '3,374,676.39'], ['Bogotá,<br>D.C.', '28,675,093.13', '192,191,163.67'], ['Bolívar', '5,776,286.68', '24,924,861.19'], ['Caquetá', '250,374.52', '555,901.29'], ['Casanare', '1,165,145.71', '7,601,060.65'], ['Cauca', '282,297.50', '570,217.27'], ['Cesar', '895,329.31', '1,213,828.99'], ['Chocó', '435,950.86', '1,626,310.67'], ['Córdoba', '1,460,166.71', '4,716,778.54'], ['Cundinam<br>arca', '56,140.25', '105,607.94'], ['Huila', '1,106,441.60', '1,905,764.99'], ['La Guajira', '254,824.20', '1,983,467.62'], ['Magdalena', '2,819,253.32', '7,416,245.78'], ['Meta', '496,932.28', '6,064,459.60'], ['Nariño', '980,716.53', '4,080,013.83']];
const row = ([n, ...v], i) => `<div class="r${i % 2 ? ' alt' : ''}${n.includes('<br>') ? ' two' : ''}"><span><i class="ex"></i><span>${n}</span></span>${v.map(x => `<span>${x}</span>`).join('')}</div>`;
$('#matrixA').innerHTML = '<div class="r hd"><span>departamento<i class="tri"></i></span><span>pasajeros</span><span>carga_bordo</span></div><div class="rows">' + rowsA.map(row).join('') + '</div><div class="r tot"><span>Total</span><span>57,703,432.97</span><span>331,372,401.26</span></div>';
const rowsB = ['Casanare 31.32 33.45 31.36', 'Meta 11.69 9.26 10.34', 'Valle_del_Cauca 4.78 5.82 4.19', 'Arauca 5.15 5.35 3.74', 'Santander 3.50 4.26 4.18', 'Bolívar 2.22 3.69 2.74', 'Tolima 4.20 3.69 5.14', 'Cesar 4.60 3.68 4.67', 'Vichada 3.47 3.59 3.45', 'Guainía 1.94 3.26 2.49', 'Nariño 1.60 2.78 1.66', 'Chocó 2.38 2.32 3.50', 'Cauca 1.49 2.19 2.20']
  .map(s => s.split(' ').map((v, i) => i ? v + '%' : v.replace(/_/g, ' ')));
$('#matrixB').innerHTML = '<div class="r hd"><span>departamento</span><span>T\nrc_ocupacion_pas\nros</span><span>%GT\nporc_car\nga_bord\no<i class="tri dn"></i></span><span>%GT\nporcentaj\ne_vuelos</span></div><div class="rows">' + rowsB.map(row).join('') + '</div><div class="r tot"><span>Total</span><span>100.00%</span><span>100.00%</span><span>100.00%</span></div>';

/* ---------- charts ---------- */
const T = (x, y, s, o = {}) => {
  const z = o.z || 9, by = y + z * .35, rot = o.rot ? ` transform="rotate(${o.rot} ${x} ${y})"` : '';
  return `<text x="${x}" y="${by}" font-size="${z}" fill="${o.f || '#605e5c'}" text-anchor="${o.a || 'middle'}"${o.w ? ` textLength="${o.w}" lengthAdjust="spacingAndGlyphs"` : ''}${o.ff ? ` font-family="${o.ff}"` : ''}${rot}>${s}</text>`;
};
const title = (x, y, s, w, z) => T(x, y, s, { a: 'start', w, z, ff: 'Roboto, sans-serif', f: '#252423' });
const grid = (y, x1, x2) => `<path d="M${x1} ${y}H${x2}" stroke="#c8c6c4" stroke-dasharray="1 5"/>`;
const rect = (x, y, w, h, f, o = 1) => `<rect x="${x}" y="${y}" width="${w}" height="${h}" fill="${f}" opacity="${o}"/>`;
const legend = (y, r, z, items) => items.map(([cx, f, x, s, w]) => C(cx, y, r, f) + T(x, y, s, { a: 'start', w, z })).join('');
const line = (xs, ys, c, w) => `<polyline points="${xs.map((x, i) => x + ',' + ys[i]).join(' ')}" fill="none" stroke="${c}" stroke-width="${w}" stroke-linecap="round" stroke-linejoin="round"/>`;
const band = (xs, top, bot, f) => `<polygon points="${xs.map((x, i) => x + ',' + top[i]).join(' ')} ${[...xs].reverse().map((x, i) => x + ',' + [...bot].reverse()[i]).join(' ')}" fill="${f}" opacity=".4"/>`;
const draw = (id, x, y, w, h, html) => {
  const s = document.getElementById(id);
  s.setAttribute('viewBox', `${x} ${y} ${w} ${h}`); s.setAttribute('width', w); s.setAttribute('height', h); s.innerHTML = html;
};
const area = (xs, o, n, b, base) => band(xs, o, n, ORANGE) + band(xs, n, b, NAVY) + band(xs, b, xs.map(() => base), BLUE) + line(xs, o, ORANGE, 2) + line(xs, n, NAVY, 2) + line(xs, b, BLUE, 2);
const labels = (list, z) => list.map(([x, y, s]) => T(x, y, s, { z })).join('');
const scroll = (y, x, w, end, h) => `<rect x="${x}" y="${y}" width="${end - x}" height="${h}" rx="${h / 2}" fill="#f0f0f0"/><rect x="${x}" y="${y}" width="${w}" height="${h}" rx="${h / 2}" fill="#b3b3b3"/>`;

let xs = [305, 404, 502, 600];
draw('a1', 279, 112, 336, 128, legend(126, 4, 9, [[265, BLUE, 270, 'pasajeros', 35], [313, NAVY, 319, 'sillas', 18], [345, ORANGE, 350, 'puestos_desaprovechados', 100]]) +
  T(265, 176, 'pasajeros, sillas a...', { rot: -90, w: 67, z: 8.5, f: '#252423' }) +
  [['40M', 157], ['30M', 177], ['20M', 197]].map(([s, y]) => grid(y, 298, 606) + T(290, y, s, { a: 'end', z: 8.7 })).join('') +
  area(xs, [170, 170, 163, 157], [176.7, 176.7, 170.5, 165.3], [209.7, 209.7, 207, 204.7], 211) +
  labels([[312, 161, '33.65M'], [403, 161, '33.51M'], [502, 155, '36.85M'], [593, 149, '39.89M'], [309, 188, '17M'], [403, 194, '17M'], [502, 190, '18M'], [596, 176, '20M'], [305, 219, '2010'], [404, 219, '2011'], [502, 219, '2012'], [600, 219, '2013']], 8.9) + T(452, 230, 'ano', { z: 8, f: '#252423' }));
xs = [659, 758, 858, 958];
draw('a2', 615, 112, 357, 128, legend(126, 4, 9, [[621, BLUE, 626, 'carga_bordo', 48], [681, NAVY, 687, 'carga_ofrecida', 55], [750, ORANGE, 755, 'carga_desperdiciada', 78]]) +
  T(620, 175, 'carga_bordo, carg...', { rot: -90, w: 66, z: 8.5, f: '#252423' }) +
  [['2bn', 151], ['1bn', 181]].map(([s, y]) => grid(y, 652, 964) + T(644, y, s, { a: 'end', z: 8.7 })).join('') +
  area(xs, [175.5, 169, 164, 158], [191, 187, 185, 181], [208, 208, 208, 208], 208.5) +
  labels([[665, 167, '1.16bn'], [758, 160, '1.39bn'], [858, 156, '1.54bn'], [952, 149, '1.76bn'], [665, 202, '0.6bn'], [758, 179, '0.6bn'], [858, 176, '0.7bn'], [952, 169, '0.8bn'], [758, 199, '0.7bn'], [858, 198, '0.8bn'], [952, 192, '0.9bn'], [659, 217, '2010'], [758, 217, '2011'], [858, 217, '2012'], [958, 217, '2013']], 8.9) + T(808, 228, 'ano', { z: 8, f: '#252423' }));

let h = title(286, 247, 'pasajeros by origen', 106, 12.5) + T(290, 291, 'pasajeros', { rot: -90, w: 34, z: 8.5, f: '#252423' }) + grid(290, 323, 966) + grid(320.5, 323, 966) + T(315, 290, '20M', { a: 'end' }) + T(315, 320, '0M', { a: 'end' });
const oTop = [277, 307, 312, 316, 317, 318], oLab = ['29M', '9M', '6M', '3M', '2M'], oY = [269, 298, 303, 307, 308];
for (let i = 0; i < 35; i++) { const x = 330 + 18.1 * i, t = oTop[i] || 319; h += rect(x, t, 14.5, 320.5 - t, BLUE, i > 11 ? .45 : 1) + T(x + 7.2, oY[i] || (i < 12 ? 310 : 311.5), oLab[i] || (i < 12 ? '1M' : '0M'), { z: 7.8 }); }
draw('a3', 279, 240, 693, 86, h);

h = title(286, 334, 'pasajeros by destino', 112, 12.5) + T(290, 366, 'pasajeros', { rot: -90, w: 34, z: 8.5, f: '#252423' }) + grid(361, 323, 966) + T(315, 361, '20M', { a: 'end' }) + T(315, 382, '0M', { a: 'end' }) + rect(329, 358, 12, 3, '#a9d3fb');
const dTop = [361, 374, 376, 380, 380, 381, 381.5], dl = ['25M', '7M', '3M', '1M', '1M', '1M'], dy = [355, 365, 370, 371];
'BOG CLO CTG SMR ADZ CUC MTR EYP NVA VUP PSO EJA IBE UIB AUC VVC PPN RCH FLA TCO PUU PCR CZU VGP GPI MVP BUN GYM NQU SVI TME BBA BMG RVE IPI 7NS 7NT PZA 7GD RAV 9CU MQU TDA'.split(' ').forEach((c, i) => {
  const x = 329 + 14.75 * i, t = dTop[i] || 382;
  h += rect(x, t, 12, 383.3 - t, BLUE, i > 10 ? .45 : 1) + T(x + 6, 388, c, { rot: -90, a: 'end', z: 8.5, w: 17 });
  if (i % 2 === 0) h += T(x + 6, dy[i / 2] || 372, dl[i / 2] || '0M', { z: 7.8 });
});
draw('a4', 279, 326, 693, 94, h + scroll(412, 323, 258, 967, 6));

/* waterfall: kind letter, top, bottom for each bar */
const KC = { B: BLUE, G: GREEN, R: RED, O: GOLD };
let NEG = [13];
const fall = (str, x0, p, w) => {
  let o = '', prev = null;
  str.split(' ').forEach((s, i) => {
    const k = s[0], [a, b] = s.slice(1).split('-').map(Number), x = x0 + p * i - w / 2;
    if (prev !== null) o += `<path d="M${x - p} ${prev}H${x + w}" stroke="#b3b0ad" stroke-width="1"/>`;
    o += rect(x, a, w, b - a, KC[k]);
    prev = (k === 'R' || (k === 'O' && NEG.includes(i))) ? b : a;
  });
  return o;
};
const legA = (y, x) => legend(y, 4, 9.5, [[290 + x, GREEN, 295 + x, 'Increase', 31], [334 + x, RED, 340 + x, 'Decrease', 34], [381 + x, BLUE, 388 + x, 'Total', 17], [413 + x, GOLD, 419 + x, 'Other', 21]]);
const xlab = (str, x0, p, y, z) => str.split(' ').map((s, i) => T(x0 + p * i, y, s, { z })).join('');
const vlab = (str, x0, p, z) => str.split(' ').map((s, i) => { const [t, y] = s.split('@'); return T(x0 + p * i, +y, t, { z, f: t === '94M' ? '#fff' : '' }); }).join('');
h = title(286, 427, 'Cantidad de carga a bordo en el tiempo', 211, 12.5) + legA(447, 0) + T(290, 485, 'carga_bordo', { rot: -90, w: 44, z: 8.5, f: '#252423' }) + grid(463, 323, 966) + grid(493, 323, 966) + T(318, 463, '100M', { a: 'end', z: 8.5 }) + T(318, 493, '80M', { a: 'end', z: 8.5 }) +
  fall('B493.5-508 G489.5-493.5 G487-489.5 G485.5-487.5 O484-485.5 R484-486 R486-488 B488-508 G486-488 R486-487.5 R487-489 R489-492 R492-495 O495-501 B501-508 O493.5-500.5 G487.5-493.5 G483.5-488 G479-484 G475-479.5 G472-475.5 B472-508', 347.5, 28.42, 22.5);
h += vlab('80M@485 3M@481 1M@478 1M@476 1M@475 -1M@496 -2M@499 83M@480 2M@477 -1M@498 -1M@500 -2M@503 -2M@505 -4M@505 75M@492 5M@485 4M@479 3M@475 3M@470 3M@467 2M@467 94M@483', 347.5, 28.42, 8) + xlab('2010 7 1 5 Other 10 12 2011 9 2 6 5 7 Other 2012 Other 7 8 10 9 11 2013', 347.5, 28.42, 515, 8.2);
draw('a5', 279, 420, 693, 108, h);
NEG = [];
h = title(287, 536, 'Cantidad pasajeros en el tiempo', 174, 12.5) + legA(556, 1) + T(290, 592, 'pasajeros', { rot: -90, w: 34, z: 8.5, f: '#252423' }) + grid(582, 323, 966) + grid(603, 323, 966) + T(315, 582, '16M', { a: 'end', z: 8.5 }) + T(315, 603, '14M', { a: 'end', z: 8.5 }) +
  fall('B610-613 G607.5-610 G606-607.5 G605-606 O604.5-605 R605-606 R606.5-608 B608-613 O604-608 G601.5-604.5 G599-601.5 G597.5-599 G595.5-598 G594-596 B594-613 G587-594 G583.5-587.5 G581.5-583.5 G580-581 R580-580.5 R580-581.5 B581.5-613', 345.5, 28.57, 22.5) +
  vlab('13.3M@601 0.2M@599 0.1M@597 0.1M@596 0.0M@611 -0.1M@611 -0.2M@611 13.5M@599 0.4M@595 0.3M@593 0.2M@591 0.2M@589 0.2M@587 0.2M@585 14.9M@585 0.6M@579 0.4M@576 0.2M@576 0.1M@576 0.0M@576 -0.1M@592 16.1M@576', 345.5, 28.57, 8) + xlab('2010 4 2 3 Other 10 8 2011 Other 9 1 7 10 12 2012 5 4 10 6 Other 12 2013', 345.5, 28.57, 621, 8.2) + '<path d="M43 636H972" stroke="#333" stroke-width="1.5" stroke-dasharray="2 1.5"/>';
draw('a6', 279, 528, 693, 110, h);

draw('b0', 1707, 363, 168, 173, C(1718, 382, 6, BLUE) + T(1726, 382, 'porc_ocupacion...', { a: 'start', w: 109, z: 13.5 }) + P('M1857 376l6 6-6 6z', '#252423') + grid(427.5, 1747, 1878) + grid(520.5, 1747, 1800) + T(1711, 427, '50K', { a: 'start', z: 13, w: 24 }) + T(1735, 520, '0K', { a: 'end', z: 13, w: 16 }) +
  rect(1797, 431, 14, 81, BLUE) + rect(1811, 469, 14, 43, NAVY) + rect(1816, 510, 4, 9, NAVY) +
  '<g fill="none" stroke="#777" stroke-width="1.2"><path d="M1804 532v-14m-5 5l5-5 5 5M1832 517v15m-5-5l5 5 5-5M1856 517v15m-3-4l3 4 3-4M1864 517v15m-3-4l3 4 3-4M1884 532v-8h8v8m-11-4l3 4 3-4m2 0l3 4 3-4M1888 524v-5M1917 518h14l-5 7v6h-4v-6zM1950 519h-5v12h13v-5M1952 518h7v7M1959 518l-7 7"/></g><path d="M1973 524h3m3 0h3m3 0h3" stroke="#555" stroke-width="2"/>');

xs = [1988, 2030, 2067, 2109, 2149, 2191, 2233, 2274, 2316, 2356, 2398, 2438];
const months = (c, y) => ['Jan 2010', 'Apr 2010', 'Jul 2010', 'Oct 2010'].map((s, i) => T(c[i], y, s, { z: 13, w: [54, 56, 52, 56][i] })).join('');
const pct = l => l.map(([x, y, s]) => T(x, y, s, { z: 12.8, w: s.length > 5 ? 44 : 37 })).join('');
draw('b1', 1895, 109, 582, 185, legend(132, 6, 13.5, [[1905, BLUE, 1913, '%GT Count of porc_ocupacion_pasajeros', 255], [2180, NAVY, 2188, 'Count of sillas', 88], [2288, ORANGE, 2297, 'Count of pasajeros', 117]]) +
  T(1905, 205, '%GT Count of p...', { rot: -90, w: 92, z: 12.5, f: '#252423' }) + grid(194, 1975, 2447) + grid(251.5, 1975, 2447) + T(1964, 194, '5,000%', { a: 'end', z: 13, w: 45 }) + T(1964, 251, '0%', { a: 'end', z: 13, w: 19 }) +
  line(xs, [206, 207.5, 202, 197, 202.5, 199, 200, 201.5, 203, 194.5, 194.5, 194.5], NAVY, 3) + line(xs, [185, 181.5, 173, 178.5, 178.5, 177, 178.5, 178.5, 172, 166, 170.5, 167], ORANGE, 3) + line(xs, xs.map(() => 251), BLUE, 3) +
  labels([[1988, 171, '57'], [1988, 192, '39'], [2030, 193, '38'], [2067, 190, '68'], [2109, 182, '47'], [2191, 166, '64'], [2191, 185, '45'], [2149, 196, '63'], [2149, 220, '42'], [2273, 196, '63'], [2315, 220, '42'], [2356, 166, '74'], [2356, 180, '49'], [2398, 188, '70'], [2438, 166, '73'], [2438, 180, '49']], 13) +
  pct([[1998.5, 237, '8.29%'], [2067.5, 237, '8.85%'], [2191, 237, '8.99%'], [2273, 237, '8.15%'], [2356, 237, '9.69%'], [2427, 237, '9.69%']]) + months([1989, 2110, 2232, 2356], 265) + T(2213, 285, 'fecha', { z: 12, w: 30, f: '#252423' }));
xs = [2568, 2610, 2648, 2690, 2731, 2773, 2814, 2856, 2898, 2939, 2981, 3022];
draw('b2', 2477, 109, 580, 185, legend(132, 6, 13.5, [[2485, BLUE, 2493, '%GT Count of porc_carga_bordo', 203], [2709, NAVY, 2717, 'Count of carga_ofrecida', 149], [2879, ORANGE, 2887, 'Count of carga_bordo', 137]]) +
  T(2485, 212, '%GT Count of por...', { rot: -90, w: 104, z: 12.5, f: '#252423' }) + grid(177, 2556, 3034) + grid(266, 2556, 3034) + T(2544, 177, '5,000%', { a: 'end', z: 13, w: 45 }) + T(2544, 266, '0%', { a: 'end', z: 13, w: 19 }) +
  line(xs, [167, 176, 176.5, 171, 174.5, 176, 178, 182, 187, 182, 198, 176], NAVY, 3) + line(xs, [172.5, 178, 171, 177, 183.5, 174.5, 181.5, 185, 182, 178, 180, 178], ORANGE, 3) + line(xs, xs.map(() => 265), BLUE, 3) +
  labels([[2568, 166, '52'], [2568, 185, '55'], [2610, 196, '49'], [2648, 194, '50'], [2669, 173, '53'], [2690, 189, '53'], [2731, 201, '46'], [2773, 192, '51'], [2814, 196, '49'], [2856, 203, '45'], [2898, 205, '44'], [2939, 167, '47'], [2939, 196, '49'], [2981, 216, '38'], [3022, 166, '49'], [3022, 194, '50']], 13) +
  pct([[2579, 262, '9.89%'], [2648, 251, '10.55%'], [2731, 251, '9.89%'], [2814, 251, '6.59%'], [2939, 251, '6.81%'], [3011, 262, '7.47%']]) + months([2569, 2691, 2815, 2939], 279) +
  '<clipPath id="cut"><path d="M2700 285h200v13h-200z"/></clipPath><g clip-path="url(#cut)">' + T(2795, 299, 'fecha', { z: 12, w: 30, f: '#252423' }) + '</g>');

h = title(2009, 310, 'Count of pasajeros by origen', 252, 18) + T(2015, 370, 'Count of p...', { rot: -90, w: 65, z: 12.5, f: '#252423' }) + grid(366, 2065, 3038) + grid(405, 2065, 3038) + T(2051, 366, '200', { a: 'end', z: 13, w: 22 }) + T(2051, 405, '0', { a: 'end', z: 13 });
const rt = [361, 390, 393.5, 394.5, 395.5, 396.5, 397.5, 398.5, 399.5, 400, 401, 401, 401], rv = '23 08 06 05 05 04 04 03 03 02 02 02 02 01 01 01 01 01 01 01 01 01'.split(' '), ry = [347, 376, 380, 380.5, 381.5, 382.5, 383.5, 385, 386, 386, 387, 387, 387];
'BOG ADZ BAQ CTG CLO MTR NVA VUP UIB FLA CZU EYP CUC IBE SMR VVC PPN PUU APO NQU COG ACD BUN CAQ PSO RCH TLU'.split(' ').forEach((c, i) => {
  const x = 2078 + 35.33 * i, t = rt[i] || (i < 22 ? 402.3 : 403.3);
  h += rect(x, t, 28, 404.5 - t, BLUE, i > 21 ? .6 : 1) + T(x + 14, ry[i] || (i < 22 ? 388.5 : 389.5), rv[i] ? `0.${rv[i]}K` : '0K', { z: 12.6, w: rv[i] ? 30.5 : 14 }) + T(x + 5, 415, c, { rot: -41, a: 'end', z: 12.8, w: c.length * 10 });
});
draw('b3', 1995, 294, 1062, 162, h);
h = title(2009, 470, 'Count of pasajeros by destino', 260, 18) + T(2015, 537, 'Count of pas...', { rot: -90, w: 77, z: 12.5, f: '#252423' }) + grid(524.5, 2065, 3046) + grid(579, 2065, 3046) + T(2051, 524.5, '200', { a: 'end', z: 13, w: 22 }) + T(2051, 579, '0', { a: 'end', z: 13 }) + rect(2078.6, 506, 29, 10, '#b0d6fb');
const et = [516, 562, 564, 566, 567, 568, 569, 570, 570, 572, 573, 573, 574], el = { 0: ['0.27K', 507], 1: ['0.06K', 545.5], 3: ['0.05K', 549.5], 5: ['0.04K', 552.5], 7: ['0.03K', 553.5], 9: ['0.02K', 555], 11: ['0.02K', 557], 13: ['0.02K', 558], 15: ['0.01K', 558.5], 17: ['0.01K', 559.5], 19: ['0.01K', 559.5] };
'BOG BAQ CTG CLO MTR NVA ADZ VUP UIB FLA EYP CZU CUC IBE SMR VVC PPN ACD NQU PUU APO BUN COG TLU CAQ PSO'.split(' ').forEach((c, i) => {
  const x = 2078.6 + 37 * i, t = et[i] || (i < 20 ? 574.7 : i < 21 ? 576.5 : 577.3), e = el[i] || (i > 20 ? ['0K', 561.5] : null);
  h += rect(x, t, 29, 578.5 - t, BLUE, i > 20 ? .7 : 1) + T(x + 14.5, 593, c, { z: 13, w: c.length * 9 }) + (e ? T(x + 14.5, e[1], e[0], { z: 12.6, w: e[0].length > 2 ? 30.5 : 14 }) : '');
});
draw('b4', 1995, 456, 1062, 154, h);
const legB = y => legend(y, 6, 13.5, [[2015, GREEN, 2023, 'Increase', 51], [2087, RED, 2096, 'Decrease', 55], [2164, BLUE, 2173, 'Total', 29], [2215, GOLD, 2223, 'Other', 36]]);
const codes = (s, y) => s.split(' ').map((c, i) => T(2087.5 + 24.13 * i, y, c === '20' ? '20...' : c === 'Ot' ? 'Ot...' : c, { rot: -90, a: 'end', z: 12.3, w: c === '20' || c === 'Ot' ? 22 : c.length * 6.6 })).join('');
const spots = l => l.split(' ').map(s => { const [i, t, y] = s.split(/[:@]/); return T(2087.5 + 24.13 * i, +y, t, { z: 12.8, w: t[0] === '-' ? 39 : 34 }); }).join('');
NEG = [6];
h = title(2009, 622, 'Cantidad de carga a bordo en el tiempo', 343, 18) + legB(656) + T(2015, 704, 'carga_...', { rot: -90, w: 44, z: 12.5, f: '#252423' }) + grid(697, 2069, 3046) + grid(727, 2069, 3046) + T(2057, 697, '0.4M', { a: 'end', z: 12.8, w: 28 }) + T(2057, 727, '0.2M', { a: 'end', z: 12.8, w: 28 }) +
  fall('B719.5-726 G709-719 G701-709 G695.5-701 G691-695.5 R691-694.5 O695-706 B706-726 G700-706 G696-700 O691.5-695.5 R692-696 R696-702 R702-709 B710-726 G705-709 G700-705 O696-700 R696-700 R700-706 R706.5-713 B713.5-726 O703-713 G696-702.5 G690-695.5 R690.5-694.5 R695-699 R699.5-705 B705-726 G700.5-705 O697-700.5 R697.5-701 R701.5-705.5 R705.5-711 R712-718.5 B719-726 G711-718.5 G706-711 G702-706 O702-703', 2087.5, 24.13, 19) +
  codes('20 28 19 108 132 128 Ot 20 116 62 Ot 132 108 19 20 23 112 Ot 62 28 116 20 Ot 114 21 112 54 23 20 174 Ot 60 189 21 114 20 168 105 17 Ot', 735) +
  spots('0:0.25M@705 2:0.05M@688.5 4:0.03M@688.5 5:-0.03M@712 7:0.34M@692 9:0.03M@688.5 11:-0.03M@713 13:-0.05M@722 14:0.31M@695.5 16:0.03M@688.5 18:-0.03M@718 20:-0.05M@722 21:0.29M@699.5 23:0.05M@688.5 25:-0.03M@711 27:-0.04M@722 28:0.34M@691.5 30:0.02M@688.5 31:-0.03M@718 33:-0.04M@722 35:0.25M@704.5 37:0.03M@692.5 39:-0.01M@720') + scroll(773, 2069, 500, 3048, 8);
draw('b5', 1995, 610, 1062, 180, h);
NEG = [6, 27];
h = title(2009, 800, 'Cantidad pasajeros en el tiempo', 282, 18) + legB(834) + T(2015, 879, 'pasaj...', { rot: -90, w: 37, z: 12.5, f: '#252423' }) + [['0.3M', 860], ['0.2M', 879.5], ['0.1M', 899]].map(([s, y]) => grid(y, 2069, 3046) + T(2057, y, s, { a: 'end', z: 12.8, w: 28 })).join('') +
  fall('B886-898 G882-886 G878-882 G875-878.5 R875-879 R879-883.5 O883.5-891 B891-898 O883-891 G878-882.5 G874-878 R874-877 R877.5-880.5 R881-884.5 B885-898 O880-885 G876-880 G872-875.5 R872-876 R876.5-880.5 R881-886 B886-898 G881.5-886 G878-882 G875-878 G872.5-875 R873-876 O876-886 B886.5-898 G879.5-886 G873.5-879 G870-873 O870-873 R873-876 R876.5-880.5 B881-898 O873-881 G864-872 G860-864 R860.5-864', 2087.5, 24.17, 19) +
  codes('20 108 132 112 94 114 Ot 20 Ot 127 62 112 132 108 20 Ot 60 112 62 127 116 20 114 94 189 62 112 Ot 20 174 125 90 Ot 94 114 20 Ot 168 92 60', 907) +
  spots('0:0.16M@872 2:0.02M@867 4:-0.02M@896 6:-0.04M@896 7:0.14M@877 9:0.02M@867 11:-0.02M@896 13:-0.02M@896 14:0.17M@871 16:0.02M@867 18:-0.02M@894 20:-0.02M@896 21:0.17M@872 23:0.02M@867 25:0.01M@867 26:-0.02M@894 28:0.16M@872 30:0.03M@867 32:-0.02M@891 34:-0.02M@896 35:0.19M@867 37:0.04M@867 39:-0.02M@881') + scroll(944.5, 2069, 500, 3048, 8);
draw('b6', 1995, 790, 1062, 170, h);

/* ---------- marker strokes over both windows ---------- */
const ink = [
  ['#26e600', '303,131 303,118 308,116 921,115.7 948,120 966,133 970,143 970,173 966,203 959,227 952,247 946,252 939,254 393,254.6 370,253 347,250 333,247 319,233 308,213 297,193 290,177 291,160 297,143 302,138 308,137 324,137 324,148 308,149 300,152 295,167 295,177 304,193 315,213 326,227 339,235 366,241 393,242 939,242 946,237 952,227 959,207 965,187 966,160 962,143 956,136 948,132 926,127 306,127'],
  ['#44c8f5', '357,263 335,266 311,275 297,290 292,313 295,330 299,347 300,360 304,372 320,391 340,404 357,411 375,412 894,412 912,410 934,404 950,394 957,383 963,370 968,353 968,330 961,313 957,290 954,283 948,278 921,269 896,263 357,263 357,275 894,275 917,281 939,289 948,298 953,310 958,330 964,343 963,355 956,372 943,385 923,398 903,400 366,400 340,392 320,380 306,365 303,347 300,330 297,313 303,295 318,283 335,277 357,275'],
  ['#6600cc', '281,440 275,467 273,500 274,540 277,570 283,593 292,613 312,623 339,635 370,643 402,647 987,647 987,635 402,635 370,631 339,622 312,609 295,600 286,587 278,563 277,540 276,500 278,473 285,457 285,440'],
  ['#26e600', '124,343 241,342 259,345 268,353 270,359 273,363 275,367 274,400 273,440 274,540 274,593 271,627 268,638 263,646 258,647 143,647 120,643 112,638 111,600 112,527 112,473 115,423 117,390 118,356 121,356 120,407 118,447 117,473 115,527 115,593 117,627 129,633 152,635 250,635 263,630 270,617 271,540 270,473 270,407 270,383 263,367 259,357 245,354 124,354'],
  ['#26e600', '67,660 71,660 76,670 94,682 120,688 152,695 196,695 214,691 221,683 222,674 225,674 224,693 214,703 196,706 165,707 134,703 98,693 78,687 69,677'],
  ['#26e600', '1942,135 1945.5,135 1944,160 1939,200 1940,217 1953,233 1966,253 1975,260 1987,264 2020,269 2138,269 2155,270 2560,271 2630,272 3015,272 3023.5,269 3038,257 3047,230 3050,200 3049,177 3045,160 3036,150 3026,146 3026,134 3038,137 3047,150 3052,167 3053,187 3052,217 3050,247 3043,267 3028,282 3019,284 2620,284 2568,282.5 2151,282 2138,281 2012,281 1987,278 1974,273 1966,267 1955.5,252 1939,235 1935,220 1935,200 1940,167'],
  ['#44c8f5', '2096,331 2084,335 2056,360 2046,383 2037,410 2035,433 2035,520 2034,527 2037,553 2045,588 2049,588 2044,553 2039,530 2039,437 2041.5,410 2060.5,377 2075,357 2088,347 2100,343 2998,344 3032,347 3053,358 3068,373 3074,390 3077,437 3076,523 3072,540 3057.5,555 3034,575 2990,590 2964,600 2930,604 2050,604 2033,598 2016,588 2025,584 2025,573 2014,575 2008,578 2008,593 2025,607 2050,615 2930,616 2956,615 2985,607 3028,590 3053,572 3074,553 3080,540 3080,437 3078,370 3074,360 3057.5,345 3036,334 3002,332 2980,331'],
  ['#6600cc', '2020,633 2006,660 1991,703 1985.5,743 1986,770 1995,810 2004,857 2014,883 2029,910 2063,930 2138,949 2180,953 2222,954 2475,954 2630,957 2896,957 2939,962 3037.5,963 3037.5,951 2981,951 2939,948 2909,946 2620,946 2467,942 2328,943 2243,941 2159,940 2117,933 2075,922 2037,905 2023,887 2010,853 2001.5,810 1990,770 1989,743 1995,710 2010,677 2023,647 2023,633'],
  ['#26e600', '1673.5,532 1676,570 1686,600 1697,623 1711,683 1730,757 1752,817 1753,868 1730,903 1727,940 1743,953 1768,959 1865,962 1928,967 1970,968 1975,966 1979,958 1981,910 1985,843 1986,693 1979,637 1970,587 1958,560 1937,540 1899,520 1882,517 1865,516 1831,516 1802,525 1751,545 1718,552 1700,552 1685,548 1685,561 1695,564 1709,564 1739,560 1781,545 1805,536 1827,531 1855,529 1882,529 1915.5,543 1945,563 1962,587 1970,633 1983,697 1982,843 1978,910 1974,947 1968,952 1865,947 1772,947 1747,940 1733,932 1733,903 1756.5,885 1758,868 1756,810 1739,750 1718,677 1705,627 1695,597 1680,567 1677,532'],
  ['#26e600', '1450.5,972 1459,972 1486,983 1516,993 1545,993 1570,977 1583.5,974 1583.5,985 1562,998 1528,1005 1503,1002 1461,987 1450.5,983']
];
$('#ink').innerHTML = ink.map(([c, p]) => `<polygon points="${p}" fill="${c}" fill-rule="evenodd" stroke="${c}" stroke-width=".8" stroke-linejoin="round"/>`).join('');

/* spread each label over its measured width */
$$('[data-fit]').forEach(e => { e.style.letterSpacing = '0'; const w = e.getBoundingClientRect().width; e.style.letterSpacing = ((+e.dataset.fit - w) / e.textContent.length) + 'px'; });
```
